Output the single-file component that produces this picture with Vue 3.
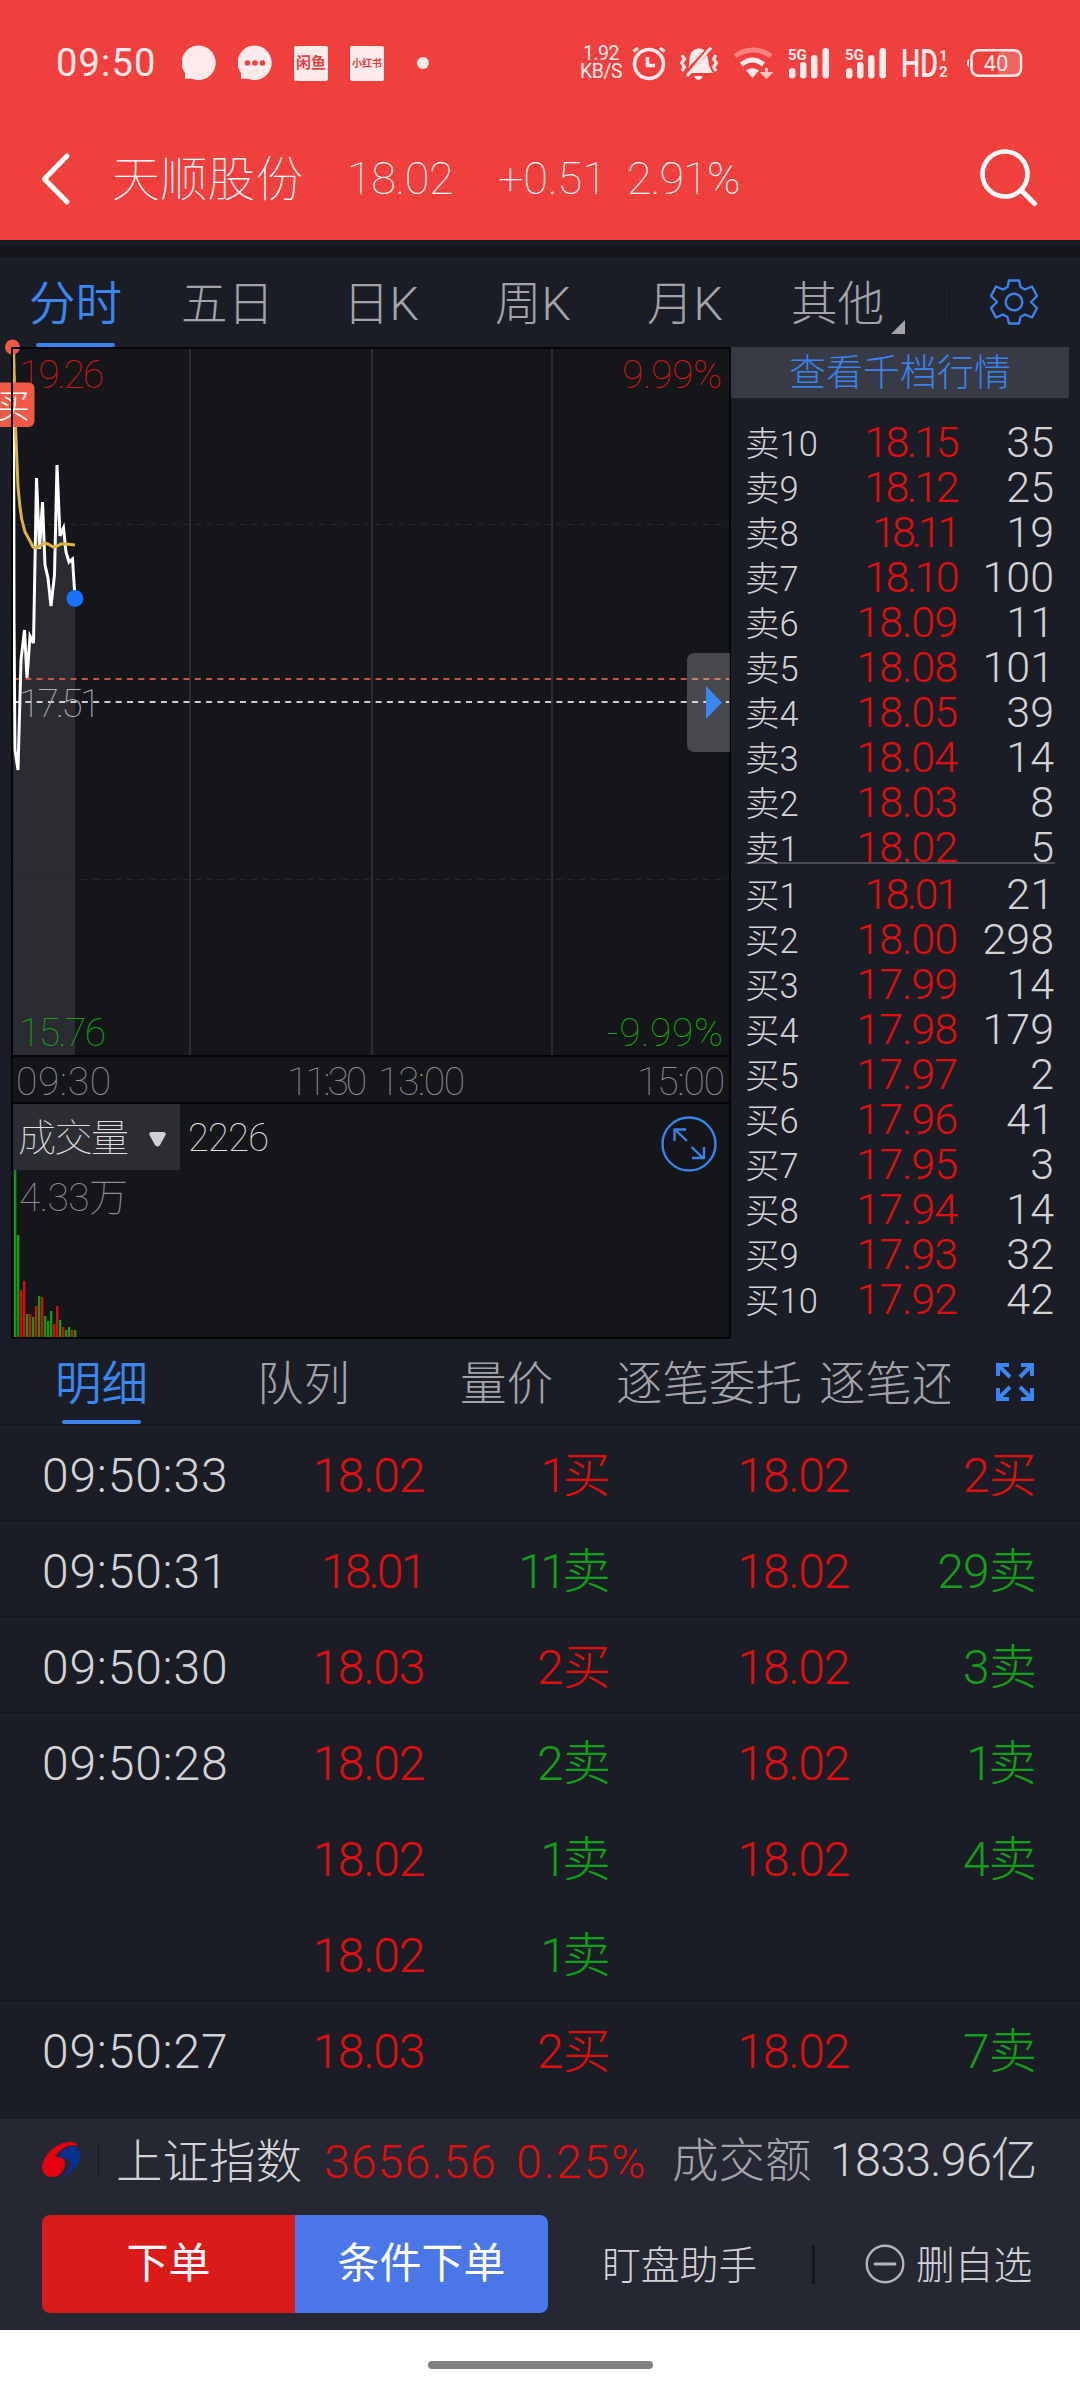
<template>
  <div class="phone">
    <header class="top">
      <div class="status">
        <span class="clock">09:50</span>
        <svg class="bubble" width="34" height="36" viewBox="0 0 34 36">
          <path d="M17 .5a17 17.300 0 1 1-7 33.200H3V28A17 17.300 0 0 1 17 .5z" fill="#fdeaea" />
        </svg>
        <svg class="bubble next" width="34" height="36" viewBox="0 0 34 36">
          <path d="M17 .5a17 17.300 0 1 1-7 33.200H3V28A17 17.300 0 0 1 17 .5z" fill="#fdeaea" />
          <circle cx="9.500" cy="18" r="2.800" fill="#ef403e" />
          <circle cx="17" cy="18" r="2.800" fill="#ef403e" />
          <circle cx="24.500" cy="18" r="2.800" fill="#ef403e" />
        </svg>
        <span class="app-badge">闲鱼</span>
        <span class="app-badge small">小红书</span>
        <span class="dot"></span>
        <span class="speed"><b>1.92</b><b>KB/S</b></span>
        <svg class="alarm" width="34" height="36" viewBox="0 0 34 36" fill="none" stroke="#fdeaea">
          <circle cx="17" cy="19" r="14.500" stroke-width="3.500" />
          <path d="M15.500 12v8.500H23" stroke-width="3.500" />
          <path d="M1.500 6.500 6 3M32.500 6.500 28 3" stroke-width="3" />
        </svg>
        <svg class="bell" width="40" height="36" viewBox="0 0 40 36" fill="#fdeaea">
          <path d="M9 23c2-3 1-8 2-12 1-5 5-7.500 9-7.500 2 0 4 .5 5.500 1.800z" />
          <path d="M12 28 28 10c2 4 1 9 3 13l3 5z" />
          <path d="M15.500 31h8c0 5-8 5-8 0z" />
          <path d="M8 31 32 2.500" stroke="#fdeaea" stroke-width="3" />
          <path d="m3 10 2.500 4-3 4 3 4L3 26M37 10l-2.500 4 3 4-3 4L37 26" fill="none" stroke="#fdeaea" stroke-width="3" />
        </svg>
        <svg class="wifi" width="40" height="36" viewBox="0 0 40 36" fill="none">
          <path d="M2 11q18-12 36 0" stroke="#f8827f" stroke-width="5" />
          <path d="M8.500 19.500q11-9 22 0" stroke="#fdeaea" stroke-width="5" />
          <path d="M13 25.500q6.500-4.500 13 0L19.500 33z" fill="#fdeaea" />
          <path d="M33.500 23v6M30 28.500h7l-3.500 3.500z" stroke="#fbc4c3" stroke-width="3" fill="#fbc4c3" />
        </svg>
        <svg v-for="n in 2" :key="n" class="signal" width="42" height="34" viewBox="0 0 42 34" fill="#fdeaea">
          <text x="0" y="13.500" class="net">5G</text>
          <rect x="1" y="22" width="6.500" height="10.500" rx="3.200" />
          <rect x="12" y="16" width="6.500" height="16.500" rx="3.200" />
          <rect x="23" y="9" width="6.500" height="23.500" rx="3.200" />
          <rect x="34.500" y="2" width="6.500" height="30.500" rx="3.200" />
        </svg>
        <svg class="hd" width="48" height="34" viewBox="0 0 48 34" fill="#fdeaea">
          <text x="-1" y="31" class="hd-text" textLength="37" lengthAdjust="spacingAndGlyphs">HD</text>
          <text x="37" y="15" class="net">1</text>
          <text x="37" y="31" class="net">2</text>
        </svg>
        <svg class="battery" width="58" height="32" viewBox="0 0 58 32">
          <path d="M2.500 12.500q-2.500 3.500 0 7z" fill="#fdeaea" stroke="#fdeaea" />
          <rect x="32" y="4" width="21" height="24" rx="5" fill="#f36563" />
          <rect x="5.500" y="3.200" width="49.500" height="25.600" rx="7" fill="none" stroke="#fdeaea" stroke-width="2.600" />
          <text x="30" y="23.500" class="battery-text">40</text>
        </svg>
      </div>
      <div class="nav">
        <svg class="back" width="30" height="54" viewBox="0 0 30 54">
          <path d="M26 4 3.500 27 26 50" fill="none" stroke="#fff" stroke-width="5" stroke-linecap="round" stroke-linejoin="round" />
        </svg>
        <span class="stock">天顺股份</span>
        <span class="quote last">18.02</span>
        <span class="quote change">+0.51</span>
        <span class="quote pct">2.91%</span>
        <svg class="search" width="58" height="58" viewBox="0 0 58 58" fill="none" stroke="#fff">
          <circle cx="25" cy="25" r="22.500" stroke-width="4.600" />
          <path d="m41 41 13.500 13.500" stroke-width="5" stroke-linecap="round" />
        </svg>
      </div>
    </header>

    <div class="strip"></div>

    <nav class="periods">
      <span v-for="(p, i) in periods" :key="p" :class="{ active: i === 0, more: i === 5 }">{{ p }}</span>
      <div class="gear-cell">
        <svg width="48" height="47" viewBox="-1 -.5 48 47" fill="none" stroke="#3b82ea" stroke-width="2.400" stroke-linejoin="round">
          <path d="M18 1h10l1.500 6.500L34 10l7-3 5 9.500-6 6 6 6-5 9.500-7-3-4.500 2.500L28 44H18l-1.500-6.500L12 35l-7 3-5-9.500 6-6-6-6L5 7l7 3 4.500-2.500z" />
          <circle cx="23" cy="22.500" r="8.300" />
        </svg>
      </div>
    </nav>

    <main class="market">
      <svg class="chart" width="731" height="992" viewBox="0 347 731 992">
        <rect x="12" y="348" width="718" height="990" fill="#15161a" />
        <path :d="area" fill="#2b2c31" />
        <path d="M190 348v708M372 348v708M552 348v708" stroke="#33343f" stroke-width="1.500" />
        <path d="M14 524.500h716M14 879.500h716" stroke="#27282e" stroke-width="1.200" stroke-dasharray="6 5.300" />
        <path d="M14 679h716" stroke="#c25641" stroke-width="2" stroke-dasharray="6 5.300" />
        <path d="M14 702h716" stroke="#cfcfd2" stroke-width="2" stroke-dasharray="6 5.300" />
        <polyline :points="pricePoints" fill="none" stroke="#fff" stroke-width="3" />
        <polyline :points="avgPoints" fill="none" stroke="#dcb444" stroke-width="3" />
        <circle cx="75" cy="598.500" r="8.500" fill="#1a70f6" />

        <g class="label">
          <text x="19" y="388" textLength="85" class="up">19.26</text>
          <text x="622" y="388" textLength="100" class="up">9.99%</text>
          <text x="19" y="717" textLength="82" class="mid">17.51</text>
          <text x="19" y="1046" textLength="87" class="down">15.76</text>
          <text x="607" y="1046" textLength="116" class="down">-9.99%</text>
          <text x="16" y="1095" textLength="95" class="axis">09:30</text>
          <text x="287" y="1095" textLength="80" class="axis">11:30</text>
          <text x="378" y="1095" textLength="87" class="axis">13:00</text>
          <text x="637" y="1095" textLength="88" class="axis">15:00</text>
        </g>

        <rect v-for="(b, i) in bars" :key="i" :x="14 + i * 3" :y="b[1]" width="2.400" :height="1337 - b[1]" :fill="b[0] ? '#d40d0d' : '#0d9a0d'" />
        <rect x="13" y="1104" width="167" height="66" fill="#2d2e33" />
        <g class="label">
          <text x="18" y="1151" class="vol" textLength="111">成交量</text>
          <text x="188" y="1151" class="vol" textLength="81">2226</text>
          <text x="19" y="1211" class="axis" textLength="109">4.33万</text>
        </g>
        <path d="M151 1132h13q3 1 1 4l-5 9q-2.500 3-5 0l-5-9q-2-3 1-4z" fill="#d0d0d2" />
        <g fill="none" stroke="#3b82ea" stroke-width="2.400">
          <circle cx="689" cy="1144" r="26.500" />
          <path d="m687 1141-11-10.500M674.500 1141v-11.500H686M691.500 1147l11 10.500M704 1147v11H692" />
        </g>

        <circle cx="12.500" cy="347" r="7.500" fill="#ef5a46" />
        <rect x="-8" y="382.500" width="42.500" height="44.500" rx="6" fill="#f05a45" />
        <text x="-3" y="418" class="mark">买</text>
        <path d="M12 348h718v990H12zM12 1056h718M12 1103h718" fill="none" stroke="#050507" stroke-width="2" />
        <path d="M730 653h-35q-8 0-8 8v83q0 8 8 8h35z" fill="#fff" fill-opacity=".22" />
        <path d="M706 686v33l16-16.500z" fill="#3b86f2" />
      </svg>

      <section class="book">
        <button class="depth-btn">查看千档行情</button>
        <div class="levels">
          <div v-for="r in asks" :key="r[0]" class="level">
            <span>{{ r[0] }}</span><b :class="ones(r[1])">{{ r[1] }}</b><i>{{ r[2] }}</i>
          </div>
        </div>
        <div class="mid-line"></div>
        <div class="levels bids">
          <div v-for="r in bids" :key="r[0]" class="level">
            <span>{{ r[0] }}</span><b :class="ones(r[1])">{{ r[1] }}</b><i>{{ r[2] }}</i>
          </div>
        </div>
      </section>
    </main>

    <nav class="subtabs">
      <div class="subtabs-scroll">
        <span v-for="(t, i) in subtabs" :key="t" :class="{ active: i === 0 }">{{ t }}</span>
      </div>
      <svg class="expand" width="38" height="38" viewBox="0 0 38 38" fill="none" stroke="#3b86f2" stroke-width="4">
        <path d="M2 13V2h11M2 2l12 12M25 2h11v11M36 2 24 14M2 25v11h11M2 36l12-12M25 36h11V25M36 36 24 24" />
      </svg>
    </nav>

    <section class="trades">
      <div v-for="(t, i) in trades" :key="i" class="trade" :class="{ open: t.open }">
        <span class="time">{{ t.time }}</span>
        <span class="price" :class="ones(t.a[0])">{{ t.a[0] }}</span>
        <span class="amount" :class="[side(t.a[1]), ones(t.a[1])]">{{ t.a[1] }}</span>
        <span class="price">{{ t.b?.[0] }}</span>
        <span class="amount" :class="[side(t.b?.[1]), ones(t.b?.[1])]">{{ t.b?.[1] }}</span>
      </div>
    </section>

    <footer class="bottom">
      <div class="index">
        <svg class="logo" width="39" height="36" viewBox="0 0 39 36">
          <path d="M0 25C1 13 15 0 28 0c4 0 7 1 8 4C29 1 18 6 13 15c6-1 10 1 10 7 0 7-6 13-12 13C4 35 0 31 0 25z" fill="#e60012" />
          <path d="M17 16C18 9 25 4 31 4c5 0 7.500 4 7.500 9 0 9-8 18-18 21.500 6-5 9-11 7.500-15-1.500-3-6-4-11-3.500z" fill="#06318f" />
        </svg>
        <span class="bar"></span>
        <span class="index-name">上证指数</span>
        <span class="index-value">3656.56</span>
        <span class="index-pct">0.25%</span>
        <span class="index-label">成交额</span>
        <span class="index-amount">1833.96亿</span>
      </div>
      <div class="actions">
        <button class="order">下单</button>
        <button class="cond">条件下单</button>
        <span class="helper">盯盘助手</span>
        <span class="split"></span>
        <svg class="minus" width="40" height="40" viewBox="0 0 40 40" fill="none" stroke="#b4b4b9">
          <circle cx="20" cy="20" r="18.300" stroke-width="2.400" />
          <path d="M10 20h20" stroke-width="2.800" stroke-linecap="round" />
        </svg>
        <span class="remove">删自选</span>
      </div>
    </footer>

    <div class="home"><span></span></div>
  </div>
</template>

<script setup>
const periods = ['分时', '五日', '日K', '周K', '月K', '其他'];
const subtabs = ['明细', '队列', '量价', '逐笔委托', '逐笔还原'];

const asks = [
  ['卖10', '18.15', 35], ['卖9', '18.12', 25], ['卖8', '18.11', 19], ['卖7', '18.10', 100],
  ['卖6', '18.09', 11], ['卖5', '18.08', 101], ['卖4', '18.05', 39], ['卖3', '18.04', 14],
  ['卖2', '18.03', 8], ['卖1', '18.02', 5],
];
const bids = [
  ['买1', '18.01', 21], ['买2', '18.00', 298], ['买3', '17.99', 14], ['买4', '17.98', 179],
  ['买5', '17.97', 2], ['买6', '17.96', 41], ['买7', '17.95', 3], ['买8', '17.94', 14],
  ['买9', '17.93', 32], ['买10', '17.92', 42],
];

// open: no divider under the row (same second continues)
const trades = [
  { time: '09:50:33', a: ['18.02', '1买'], b: ['18.02', '2买'] },
  { time: '09:50:31', a: ['18.01', '11卖'], b: ['18.02', '29卖'] },
  { time: '09:50:30', a: ['18.03', '2买'], b: ['18.02', '3卖'] },
  { time: '09:50:28', a: ['18.02', '2卖'], b: ['18.02', '1卖'], open: true },
  { time: '', a: ['18.02', '1卖'], b: ['18.02', '4卖'], open: true },
  { time: '', a: ['18.02', '1卖'] },
  { time: '09:50:27', a: ['18.03', '2买'], b: ['18.02', '7卖'], open: true },
];
const side = (text) => (text && text.endsWith('买') ? 'buy' : 'sell');

// the digit 1 is narrow, so texts with more of them are set tighter
const ones = (text = '') => `ones-${text.split('1').length - 1}`;

const pricePoints = '13.5,348 14,620 15,750 18,770 21,660 24.500,630 27,678 30,636 33.500,643 36.500,478 39.500,549 42.500,502 45,565 48,578 51,606 54.500,575 57,465 60,536 63.500,528 66,552 69,562 72.500,559 75,598';
const avgPoints = '13.5,348 15.500,427 18,487 20,507 21.700,519 25,532 30,541 33,547 36,548 40,546 44,543 48,544 53,547 57,546 61,544 66,544 75,545';
const area = `M${pricePoints.split(' ').join('L')}V1055H13z`;

// [rising, top y]
const bars = [
  [0, 1168], [0, 1235], [1, 1290], [1, 1281], [0, 1314], [1, 1314], [0, 1317],
  [1, 1306], [0, 1296], [1, 1297], [0, 1316], [0, 1321], [0, 1311], [1, 1324],
  [1, 1306], [0, 1320], [1, 1327], [0, 1330], [0, 1327], [1, 1330], [0, 1330],
];
</script>

<style>
body {
  background: #1b1d26;
}
</style>

<style scoped>
.phone {
  width: 1080px;
  height: 2400px;
  overflow: hidden;
  display: flex;
  flex-direction: column;
  background: #1b1d26;
  color: #d3d3d5;
  font-family: Roboto, 'Noto Sans CJK SC', sans-serif;
  font-weight: 300;
  white-space: nowrap;
}

b, i {
  font-weight: inherit;
  font-style: normal;
}

button {
  border: 0;
  padding: 0;
  font-family: inherit;
  font-weight: inherit;
}

svg {
  display: block;
  flex: none;
}

/* header */
.top {
  height: 240px;
  background: #ef403e;
  color: #fff;
}

.status {
  height: 118px;
  padding: 8px 0 0 56px;
  box-sizing: border-box;
  display: flex;
  align-items: center;
  color: #fdeaea;
}

.clock {
  width: 126px;
  font-size: 38px;
  font-weight: 400;
  letter-spacing: 1.2px;
}

.bubble.next { margin-left: 22px; }

.app-badge {
  width: 34px;
  height: 35px;
  margin-left: 22px;
  border-radius: 2px;
  background: #fdeaea;
  color: #e04442;
  font-size: 15px;
  font-weight: 700;
  line-height: 35px;
  text-align: center;
}

.app-badge.small {
  font-size: 10px;
}

.dot {
  width: 12px;
  height: 12px;
  margin-left: 33px;
  border-radius: 50%;
  background: #fdeaea;
}

.speed {
  width: 42px;
  margin-left: 151px;
  display: flex;
  flex-direction: column;
  align-items: center;
  font-size: 19.500px;
  font-weight: 400;
  line-height: 18px;
  letter-spacing: -0.5px;
}

.alarm { margin-left: 10px; }
.bell { margin-left: 13px; }
.wifi { margin-left: 14px; }
.signal { margin-left: 15px; }
.hd { margin-left: 15px; }
.battery { margin-left: 16px; }

.net {
  font-size: 15px;
  font-weight: 700;
}

.hd-text {
  font-size: 38px;
  font-weight: 500;
}

.battery-text {
  fill: #fdeaea;
  font-size: 22px;
  font-weight: 400;
  text-anchor: middle;
}

.nav {
  height: 122px;
  padding-left: 41px;
  display: flex;
  align-items: center;
  line-height: 60px;
}

.stock {
  width: 235px;
  margin-left: 41px;
  padding-top: 2px;
  font-size: 47.800px;
  font-weight: 100;
}

.quote {
  font-size: 45px;
  font-weight: 100;
}

.last { width: 151px; letter-spacing: -0.4px; }
.change { width: 129px; }
.pct { width: 353px; letter-spacing: -0.9px; }
.search { margin-top: -2px; }

.strip {
  height: 11px;
  margin-top: 6px;
  background: #15161a;
}

/* period tabs */
.periods {
  height: 90px;
  padding-left: 29px;
  display: grid;
  grid-template-columns: 152px 162px 152px 152px 144px 158px 130px;
  color: #a3a3a8;
  font-size: 46.500px;
  line-height: 94px;
}

.active {
  position: relative;
  color: #3b86f0;
  font-weight: 350;
}

.active::after {
  content: '';
  position: absolute;
  left: 7px;
  bottom: 0;
  width: 79px;
  height: 4px;
  border-radius: 2px;
  background: #3b82ea;
}

.periods .active,
.periods .more {
  height: 90px;
}

.more {
  position: relative;
}

.more::after {
  content: '';
  position: absolute;
  left: 100px;
  top: 63px;
  border-bottom: 14px solid #a3a3a8;
  border-left: 14px solid transparent;
}

.gear-cell {
  height: 40px;
  margin-top: 25px;
  padding-left: 40px;
  border-left: 1px solid #15161a;
  display: flex;
  align-items: center;
}

/* chart + order book */
.market {
  height: 992px;
  display: flex;
}

.chart {
  overflow: visible;
}

.label {
  font-size: 39px;
  font-weight: 100;
}

.up { fill: #d81414; }
.down { fill: #12a512; }
.mid { fill: #b4b4b8; }
.axis { fill: #8c8c92; }
.vol { fill: #e0e0e2; font-size: 38px; }

.mark {
  fill: #fff;
  font-size: 33px;
  font-weight: 300;
}

.book {
  width: 338px;
}

.depth-btn {
  width: 338px;
  height: 51px;
  padding-top: 2px;
  background: #383a46;
  color: #3b82ea;
  font-size: 37px;
  line-height: 49px;
}

.levels {
  margin: 22px 15px 0 14px;
}

.level {
  height: 45px;
  display: grid;
  grid-template-columns: 90px 122px 97px;
  align-items: center;
  line-height: 45px;
}

.level span { font-size: 34.500px; padding-top: 3px; line-height: 42px; }
.level b { font-size: 43px; text-align: right; color: #e00e0e; letter-spacing: -1px; }
.level i { font-size: 43px; text-align: right; }
.level .ones-2 { letter-spacing: -2.600px; }
.level .ones-3 { letter-spacing: -4.200px; }

.mid-line {
  height: 2px;
  margin: -8px 14px 0;
  background: #4a4b56;
}

.bids {
  margin-top: 8px;
}

/* detail tabs */
.subtabs {
  height: 85px;
  display: flex;
  align-items: center;
  border-bottom: 1px solid #15161a;
}

.subtabs-scroll {
  width: 895px;
  height: 85px;
  padding-left: 55px;
  overflow: hidden;
  display: grid;
  grid-template-columns: 202px 203px 156px 203px 200px;
  font-size: 46.500px;
  line-height: 90px;
  color: #a3a3a8;
}

.subtabs-scroll span {
  height: 85px;
}

.expand {
  margin-left: 46px;
}

/* trades */
.trades {
  height: 694px;
}

.trade {
  height: 96px;
  box-sizing: border-box;
  padding-left: 42px;
  display: grid;
  grid-template-columns: 200px 182px 186px 239px 187px;
  border-bottom: 1px solid #15161a;
  font-size: 48px;
  line-height: 101px;
  text-align: right;
}

.trade span { height: 95px; }
.trade.open { border-color: transparent; }
.trade .time { text-align: left; letter-spacing: 0.8px; }
.price, .buy { color: #e00e0e; }
.price { letter-spacing: -1.300px; }
.price.ones-2 { letter-spacing: -3px; }
.sell { color: #149e1a; }
.amount { letter-spacing: -0.8px; }
.amount.ones-1 { letter-spacing: -4px; padding-right: 3px; margin-right: -3px; }
.amount.ones-1, .amount.ones-2 { letter-spacing: -4.500px; padding-right: 4px; margin-right: 0; }

/* footer */
.bottom {
  height: 211px;
  background: #252733;
}

.index {
  height: 82px;
  padding-left: 42px;
  display: flex;
  align-items: center;
  font-size: 46.500px;
  line-height: 60px;
}

.bar {
  width: 1px;
  height: 34px;
  margin: 0 17px;
  background: #15161a;
}

.index-name { width: 208px; padding-top: 4px; }
.index-value { width: 192px; color: #e00e0e; letter-spacing: 1px; padding-top: 3px; }
.index-pct { width: 156px; color: #e00e0e; letter-spacing: 1.600px; padding-top: 3px; }
.index-label { width: 158px; color: #a3a3a8; padding-top: 2px; }
.index-amount { letter-spacing: -0.7px; }

.actions {
  height: 98px;
  margin-top: 14px;
  padding-left: 42px;
  display: flex;
  align-items: center;
  font-size: 38.800px;
  line-height: 50px;
}

.order, .cond {
  width: 253px;
  height: 98px;
  color: #fff;
  font-size: 42px;
  font-weight: 400;
  line-height: 98px;
}

.order {
  border-radius: 8px 0 0 8px;
  background: #db1a1a;
}

.cond {
  border-radius: 0 8px 8px 0;
  background: #4a76e8;
}

.helper { width: 210px; margin-left: 54px; padding-top: 3px; }

.split {
  width: 3px;
  height: 39px;
  background: #15161a;
}

.minus { margin-left: 50px; }
.remove { margin-left: 11px; padding-top: 3px; }

.home {
  flex: 1;
  background: #fff;
  display: flex;
  justify-content: center;
  padding-top: 31px;
}

.home span {
  width: 225px;
  height: 8px;
  border-radius: 4px;
  background: #808080;
}
</style>
